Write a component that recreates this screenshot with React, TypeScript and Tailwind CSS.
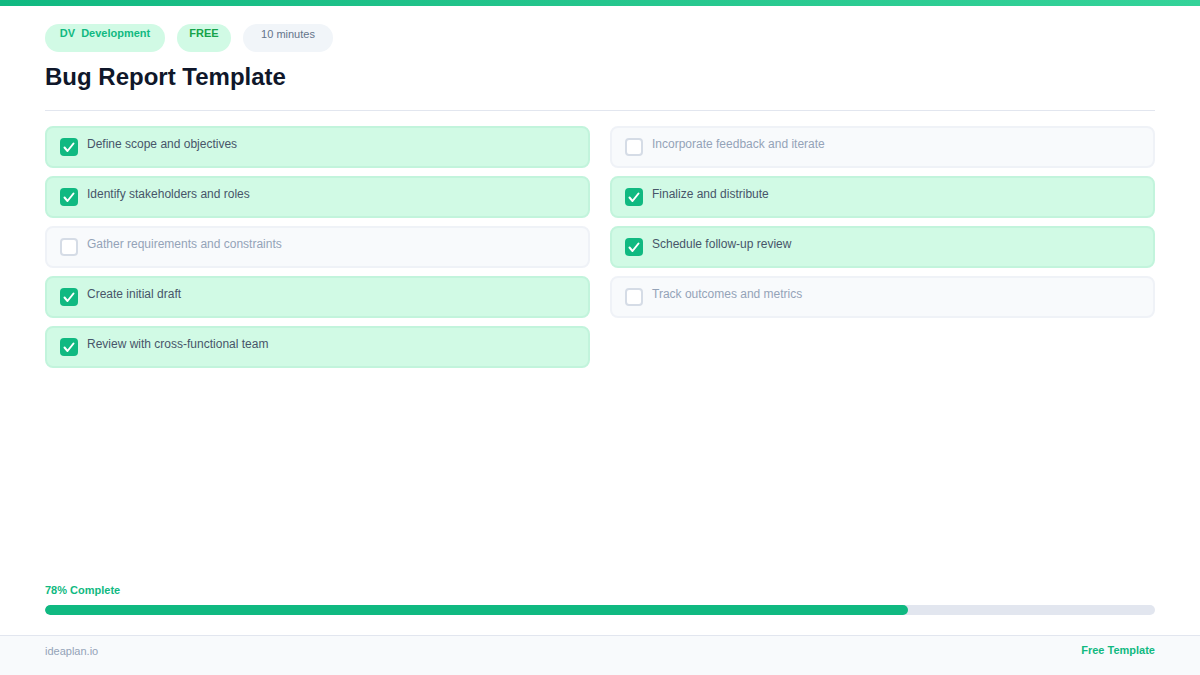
const leftItems = [
  { label: 'Define scope and objectives', done: true },
  { label: 'Identify stakeholders and roles', done: true },
  { label: 'Gather requirements and constraints', done: false },
  { label: 'Create initial draft', done: true },
  { label: 'Review with cross-functional team', done: true },
];

const rightItems = [
  { label: 'Incorporate feedback and iterate', done: false },
  { label: 'Finalize and distribute', done: true },
  { label: 'Schedule follow-up review', done: true },
  { label: 'Track outcomes and metrics', done: false },
];

const ChecklistItem = ({ label, done }: { label: string; done: boolean }) => (
  <div
    className={`flex h-[42px] items-start gap-[9px] rounded-lg border-2 pl-[13px] pt-[9px] ${
      done ? 'border-[#c2f4dc] bg-[#d1fae5]' : 'border-[#eff2f7] bg-[#f8fafc]'
    }`}
  >
    {done ? (
      <span className="mt-[1px] flex h-[18px] w-[18px] shrink-0 items-center justify-center rounded-[4px] bg-[#10b981]">
        <svg width="12" height="12" viewBox="0 0 12 12" fill="none">
          <path d="M1.5 6.5 L4.5 10 L10.5 2.5" stroke="#ffffff" strokeWidth="2" strokeLinecap="round" strokeLinejoin="round" />
        </svg>
      </span>
    ) : (
      <span className="mt-[1px] h-[18px] w-[18px] shrink-0 rounded-[4px] border-2 border-[#d5dce6] bg-white" />
    )}
    <span className={`text-[12px] leading-[14px] ${done ? 'text-[#475569]' : 'text-[#94a3b8]'}`}>{label}</span>
  </div>
);

export default function App() {
  return (
    <div className="flex h-[675px] w-[1200px] flex-col overflow-hidden bg-white font-['Liberation_Sans',Arial,sans-serif]">
      <div className="h-[6px] shrink-0 bg-gradient-to-r from-[#10b981] to-[#34d399]" />

      <div className="flex flex-1 flex-col px-[45px] pt-[18px]">
        <div className="flex gap-3">
          <span className="h-7 w-[120px] whitespace-pre rounded-[14px] bg-[#d1fae5] pt-[3px] text-center text-[11px] font-bold leading-[13px] text-[#10b981]">
            DV  Development
          </span>
          <span className="h-7 w-[54px] rounded-[14px] bg-[#d1fae5] pt-[3px] text-center text-[11px] font-bold leading-[13px] text-[#16a34a]">
            FREE
          </span>
          <span className="h-7 w-[90px] rounded-[14px] bg-[#f1f5f9] pt-[4px] text-center text-[11px] leading-[13px] text-[#64748b]">
            10 minutes
          </span>
        </div>

        <h1 className="mt-[9px] text-[24px] font-bold leading-[32px] text-[#0f172a]">Bug Report Template</h1>

        <div className="mt-[17px] h-px bg-[#e2e6ef]" />

        <div className="mt-[15px] grid grid-cols-2 gap-x-5">
          <div className="flex flex-col gap-2">
            {leftItems.map((item) => (
              <ChecklistItem key={item.label} label={item.label} done={item.done} />
            ))}
          </div>
          <div className="flex flex-col gap-2">
            {rightItems.map((item) => (
              <ChecklistItem key={item.label} label={item.label} done={item.done} />
            ))}
          </div>
        </div>

        <div className="mt-auto pb-5">
          <p className="text-[11px] font-bold leading-[13px] text-[#10b981]">78% Complete</p>
          <div className="mt-[8px] h-[10px] overflow-hidden rounded-[5px] bg-[#e2e6ef]">
            <div className="h-full rounded-[5px] bg-[#10b981]" style={{ width: '77.75%' }} />
          </div>
        </div>
      </div>

      <div className="flex h-[40px] shrink-0 items-start justify-between border-t border-[#e2e6ef] bg-[#f8fafc] px-[45px] pt-[8px]">
        <span className="text-[11px] leading-[14px] text-[#94a3b8]">ideaplan.io</span>
        <span className="text-[11px] font-bold leading-[13px] text-[#10b981]">Free Template</span>
      </div>
    </div>
  );
}
